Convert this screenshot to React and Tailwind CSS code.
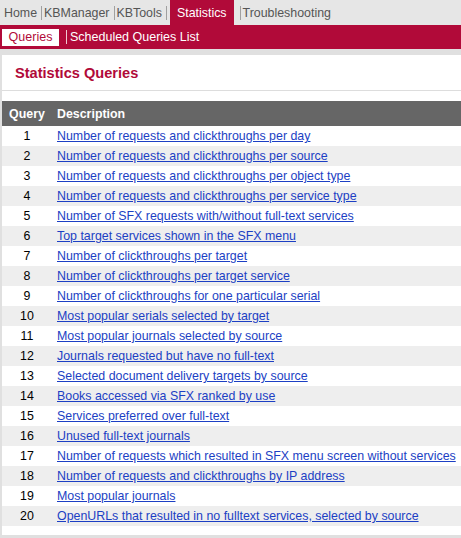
import React from 'react';

const queries = [
  'Number of requests and clickthroughs per day',
  'Number of requests and clickthroughs per source',
  'Number of requests and clickthroughs per object type',
  'Number of requests and clickthroughs per service type',
  'Number of SFX requests with/without full-text services',
  'Top target services shown in the SFX menu',
  'Number of clickthroughs per target',
  'Number of clickthroughs per target service',
  'Number of clickthroughs for one particular serial',
  'Most popular serials selected by target',
  'Most popular journals selected by source',
  'Journals requested but have no full-text',
  'Selected document delivery targets by source',
  'Books accessed via SFX ranked by use',
  'Services preferred over full-text',
  'Unused full-text journals',
  'Number of requests which resulted in SFX menu screen without services',
  'Number of requests and clickthroughs by IP address',
  'Most popular journals',
  'OpenURLs that resulted in no fulltext services, selected by source',
];

function Sep({ className = '' }) {
  return <span className={`w-px h-[14px] bg-[#a0a0a0] ${className}`} />;
}

export default function App() {
  return (
    <div
      className="min-h-screen bg-[#e0e0e0] text-[12.4px] leading-[14px] overflow-hidden"
      style={{ fontFamily: '"Liberation Sans", Arial, sans-serif' }}
    >
      <nav className="h-[25px] bg-[#e6e6e6] flex items-center text-[#555] text-[12.4px] whitespace-nowrap">
        <span className="ml-[4px]">Home</span>
        <Sep className="ml-[4px]" />
        <span className="ml-[2px]">KBManager</span>
        <Sep className="ml-[4px]" />
        <span className="ml-[2px]">KBTools</span>
        <Sep className="ml-[4px]" />
        <span className="ml-[3px] h-full flex items-center px-[7px] bg-[#b10a39] text-white">Statistics</span>
        <Sep className="ml-[6px]" />
        <span className="ml-[2px]">Troubleshooting</span>
      </nav>

      <div className="h-[24px] bg-[#b10a39] flex items-center text-white text-[12.5px] whitespace-nowrap">
        <span className="ml-[2px] w-[57px] h-[17px] bg-white text-[#b10a39] flex items-center justify-center">
          Queries
        </span>
        <span className="ml-[7px] w-px h-[14px] bg-[#f0c8d2]" />
        <span className="ml-[3px]">Scheduled Queries List</span>
      </div>

      <div className="mt-[6px] ml-[2px] bg-white pt-[10px] pb-[9px]">
        <div className="border-b border-[#dddddd] pl-[13px] pb-[8px]">
          <h1 className="text-[14.6px] leading-[17px] font-bold text-[#b10a39]">Statistics Queries</h1>
        </div>

        <table className="mt-[10px] w-full border-collapse whitespace-nowrap">
          <thead>
            <tr className="h-[25px] bg-[#666666] text-white font-bold">
              <th className="w-[50px] text-center font-bold">Query</th>
              <th className="pl-[5px] text-left font-bold">Description</th>
            </tr>
          </thead>
          <tbody>
            {queries.map((q, i) => (
              <tr key={i} className={`h-[20px] ${i % 2 === 1 ? 'bg-[#eeeeee]' : 'bg-white'}`}>
                <td className="w-[50px] text-center text-black">{i + 1}</td>
                <td className="pl-[5px]">
                  <a href="#" className="text-[#1c3fc4] underline">{q}</a>
                </td>
              </tr>
            ))}
          </tbody>
        </table>
      </div>
    </div>
  );
}
